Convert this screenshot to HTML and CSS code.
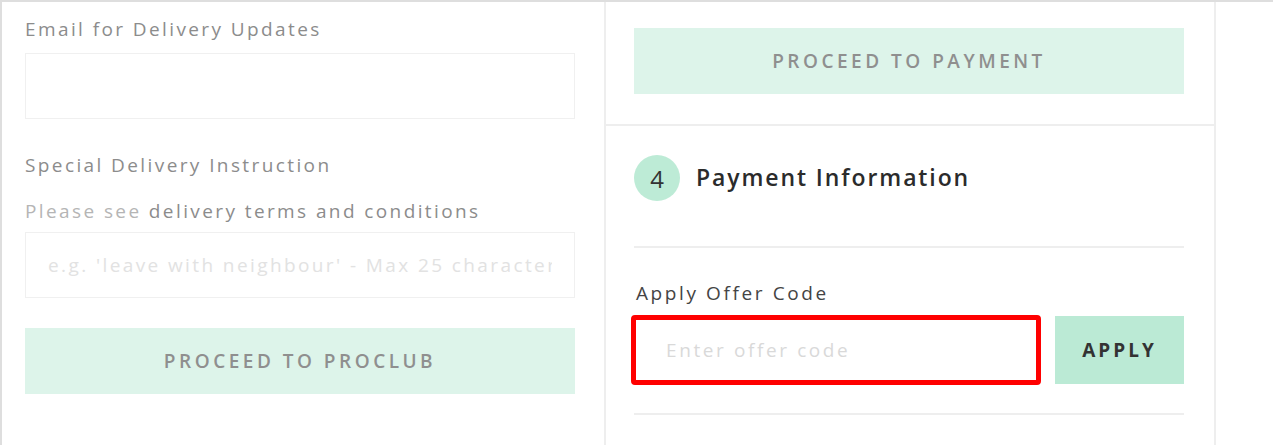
FILE: index.html
```html
<!DOCTYPE html>
<html lang="en">
<head>
    <meta charset="UTF-8">
    <meta name="viewport" content="width=device-width, initial-scale=1.0">
    <title>Checkout</title>
    <link rel="stylesheet" href="styles.css">
</head>
<body>
    <div class="checkout">
        <div class="col col-left">
            <label class="field-label">Email for Delivery Updates</label>
            <input class="text-input" type="email">

            <label class="field-label second">Special Delivery Instruction</label>
            <p class="terms">Please see <a href="#">delivery terms and conditions</a></p>
            <input class="text-input note" type="text" placeholder="e.g. 'leave with neighbour' - Max 25 characters">

            <button class="btn-proceed left-btn">PROCEED TO PROCLUB</button>
        </div>

        <div class="col col-right">
            <div class="section top-section">
                <button class="btn-proceed">PROCEED TO PAYMENT</button>
            </div>
            <div class="section payment">
                <div class="step-head">
                    <span class="step-num">4</span>
                    <h2>Payment Information</h2>
                </div>
                <div class="offer">
                    <label class="offer-label">Apply Offer Code</label>
                    <div class="offer-row">
                        <input class="offer-input" type="text" placeholder="Enter offer code">
                        <button class="btn-apply">APPLY</button>
                    </div>
                </div>
            </div>
        </div>
    </div>
</body>
</html>
```

FILE: styles.css
```css
body {
    margin: 0;
    font-family: 'Open Sans', 'Liberation Sans', sans-serif;
    background-color: white;
    color: #333;
}
.checkout {
    display: grid;
    grid-template-columns: 602px 612px;
    height: 445px;
    border-top: 2px solid #dedede;
    border-left: 2px solid #dedede;
    box-sizing: border-box;
}
.col-left {
    padding: 14px 29px 0 23px;
}
.col-right {
    border-left: 2px solid #eeeeee;
    border-right: 2px solid #eeeeee;
}
.field-label {
    display: block;
    font-size: 19px;
    letter-spacing: 2.4px;
    color: #8c8c8c;
    line-height: 26px;
}
.field-label.second {
    margin-top: 33px;
}
.text-input {
    display: block;
    width: 100%;
    height: 66px;
    margin-top: 11px;
    box-sizing: border-box;
    border: 1px solid #f0f0f0;
    padding: 0 22px;
    font-family: inherit;
    font-size: 19px;
    letter-spacing: 2.4px;
    outline: none;
}
.text-input::placeholder {
    color: #e2e2e2;
}
.terms {
    margin: 20px 0 0;
    font-size: 19px;
    letter-spacing: 2.4px;
    line-height: 26px;
    color: #b5b5b5;
}
.terms a {
    color: #8c8c8c;
    text-decoration: none;
}
.text-input.note {
    margin-top: 8px;
}
.btn-proceed {
    display: block;
    width: 100%;
    height: 66px;
    border: none;
    background-color: #ddf4ea;
    color: #8f8f8f;
    font-family: inherit;
    font-size: 19px;
    font-weight: 600;
    letter-spacing: 3.5px;
    cursor: pointer;
}
.left-btn {
    margin-top: 30px;
}
.section {
    padding: 0 30px 0 28px;
}
.top-section {
    padding-top: 26px;
    padding-bottom: 30px;
    border-bottom: 2px solid #eeeeee;
}
.payment {
    padding-top: 29px;
}
.step-head {
    display: flex;
    align-items: center;
    gap: 16px;
    height: 46px;
    padding-bottom: 45px;
    border-bottom: 2px solid #eeeeee;
}
.step-num {
    width: 46px;
    height: 46px;
    border-radius: 50%;
    background-color: #bdebd6;
    display: flex;
    align-items: center;
    justify-content: center;
    font-size: 24px;
    font-weight: 500;
    color: #333;
}
.step-head h2 {
    margin: 0;
    margin-top: -3px;
    font-size: 23px;
    font-weight: 600;
    letter-spacing: 1.9px;
    color: #2b2b2b;
}
.offer {
    padding-top: 32px;
    padding-bottom: 28px;
    border-bottom: 2px solid #eeeeee;
}
.offer-label {
    display: block;
    font-size: 19px;
    letter-spacing: 2.6px;
    color: #444;
    line-height: 26px;
    margin-left: 2px;
}
.offer-row {
    display: flex;
    align-items: flex-start;
    gap: 14px;
    margin-top: 9px;
    margin-left: -3px;
}
.offer-input {
    width: 410px;
    height: 70px;
    box-sizing: border-box;
    border: 5px solid #ff0000;
    border-radius: 4px;
    padding: 0 30px;
    font-family: inherit;
    font-size: 19px;
    letter-spacing: 2.6px;
    outline: none;
}
.offer-input::placeholder {
    color: #d9d9d9;
}
.btn-apply {
    width: 129px;
    height: 68px;
    margin-top: 1px;
    border: none;
    background-color: #bbead5;
    color: #333;
    font-family: inherit;
    font-size: 19px;
    font-weight: 700;
    letter-spacing: 3px;
    cursor: pointer;
}
```
